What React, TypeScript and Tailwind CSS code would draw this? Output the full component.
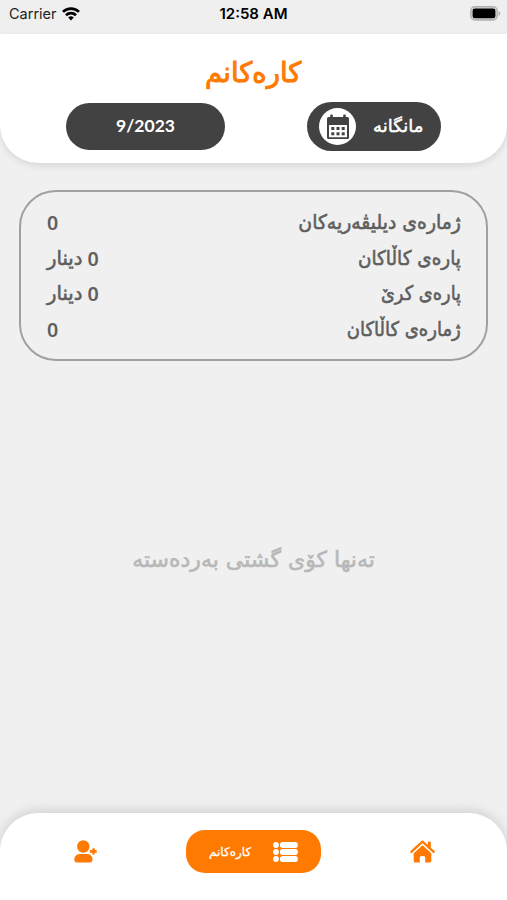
import React from 'react';

const stats = [
  { id: 1, label: 'ژمارەی دیلیڤەریەکان', value: '0', unit: '', scale: 'scale-x-[0.94]' },
  { id: 2, label: 'پارەی کاڵاکان', value: '0', unit: 'دینار', scale: 'scale-x-[0.92]' },
  { id: 3, label: 'پارەی کرێ', value: '0', unit: 'دینار', scale: 'scale-x-[0.89]' },
  { id: 4, label: 'ژمارەی کاڵاکان', value: '0', unit: '', scale: 'scale-x-[0.9]' },
];

function WifiIcon() {
  return (
    <svg width="18" height="14" viewBox="0 0 18 14" fill="none" stroke="#000" strokeWidth="2.7">
      <path d="M1 4.9a11.5 11.5 0 0 1 16 0" />
      <path d="M4 8.2a7.2 7.2 0 0 1 10 0" />
      <path d="M9 13.4 6.2 10.6a4 4 0 0 1 5.6 0z" fill="#000" stroke="none" />
    </svg>
  );
}

function BatteryIcon() {
  return (
    <svg width="31" height="15" viewBox="0 0 31 15">
      <rect x="0.8" y="0.8" width="26.4" height="13.2" rx="4" fill="#d4d4d4" stroke="#b0b0b0" strokeWidth="1.4" />
      <rect x="2.6" y="2.6" width="22.8" height="9.6" rx="2.2" fill="#000" />
      <path d="M28.7 5c2 .8 2 4 0 4.8z" fill="#aaa" />
    </svg>
  );
}

function CalendarIcon() {
  return (
    <svg width="24" height="26" viewBox="0 0 24 26" fill="#424242">
      <rect x="4.2" y="0.5" width="2.6" height="5" rx="1" />
      <rect x="17.2" y="0.5" width="2.6" height="5" rx="1" />
      <path
        fillRule="evenodd"
        d="M2.5 3h19A1.5 1.5 0 0 1 23 4.5v19a1.5 1.5 0 0 1-1.5 1.5h-19A1.5 1.5 0 0 1 1 23.5v-19A1.5 1.5 0 0 1 2.5 3zM3 11v12.3h18V11z"
      />
      {[5.3, 10.5, 15.7].map((x) => (
        <React.Fragment key={x}>
          <rect x={x} y="13" width="3" height="3" />
          <rect x={x} y="18.3" width="3" height="3" />
        </React.Fragment>
      ))}
    </svg>
  );
}

function UserIcon() {
  return (
    <svg width="23" height="23" viewBox="0 0 23 23" fill="#ff7a00">
      <circle cx="9.3" cy="6.5" r="6.2" />
      <path d="M6.5 14h6c3.5 0 6 2 6 5.5 0 1.800-1 3-2.700 3H3C1.300 22.500.3 21.300.3 19.500.3 16 3 14 6.500 14z" />
      <path d="M18.300 8.600q1.300-.8 2.600 0v1.500h1.500q.9 1.300 0 2.600h-1.500v1.500q-1.300.8-2.600 0v-1.500H16q-.7-1.300 0-2.600h2.300z" />
    </svg>
  );
}

function ListIcon() {
  return (
    <svg width="25" height="20" viewBox="0 0 25 20" fill="#fff">
      {[3, 10, 17].map((y) => (
        <React.Fragment key={y}>
          <circle cx="3" cy={y} r="2.9" />
          <rect x="7" y={y - 2.9} width="17.8" height="5.8" rx="2.5" />
        </React.Fragment>
      ))}
    </svg>
  );
}

function HomeIcon() {
  return (
    <svg width="25" height="23" viewBox="0 0 25 23" fill="#ff7a00">
      <path d="M1.3 11.8 12.5 1.7l11.2 10.1" fill="none" stroke="#ff7a00" strokeWidth="2.3" strokeLinecap="round" strokeLinejoin="round" />
      <path d="M17.8 2.5q0-1 1-1h1q1 0 1 1v5.8l-3-2.7z" />
      <path d="m12.5 5.300 8.800 7.900V21a1.500 1.500 0 0 1-1.500 1.500h-4.600v-5a1.500 1.500 0 0 0-1.500-1.500h-2.400a1.500 1.500 0 0 0-1.500 1.500v5H5.200A1.500 1.500 0 0 1 3.700 21v-7.800z" />
    </svg>
  );
}

export default function App() {
  return (
    <div className="flex h-[900px] w-[507px] flex-col overflow-hidden bg-[#f0f0f0] font-['DejaVu_Sans',sans-serif]">
      {/* Status bar */}
      <div className="grid h-[34px] shrink-0 grid-cols-3 items-start bg-[#efefef] pt-[6px] pr-[6px] pl-[9px] font-['Inter',sans-serif] text-[14.5px] leading-[16px] text-[#222]">
        <div className="flex items-center gap-[5px]">
          <span>Carrier</span>
          <WifiIcon />
        </div>
        <span className="-ml-[3px] text-center text-[15px] font-semibold whitespace-nowrap text-black">12:58 AM</span>
        <div className="flex justify-end">
          <BatteryIcon />
        </div>
      </div>

      {/* Header */}
      <header className="flex h-[129px] shrink-0 flex-col items-center rounded-b-[38px] bg-white shadow-[0_3px_7px_rgba(0,0,0,0.1)]">
        <h1 dir="rtl" className="mt-[19px] h-[40px] scale-x-[0.98] text-[28px] leading-[40px] whitespace-nowrap text-[#ff7a00] [-webkit-text-stroke:1px]">
          کارەکانم
        </h1>
        <div className="mt-[9px] flex h-[49px] w-full items-center justify-between px-[66px]">
          <button className="flex h-[47px] w-[159px] items-center justify-center rounded-full bg-[#424242] font-['Lato',sans-serif] text-[17.5px] font-bold text-white">
            9/2023
          </button>
          <button className="flex h-[49px] w-[134px] items-center rounded-full bg-[#424242] pl-[12px]">
            <span className="flex size-[37px] shrink-0 items-center justify-center rounded-full bg-white">
              <CalendarIcon />
            </span>
            <span dir="rtl" className="ml-[17px] origin-left scale-x-[1.03] text-[17.5px] whitespace-nowrap text-white [-webkit-text-stroke:0.5px]">
              مانگانە
            </span>
          </button>
        </div>
      </header>

      <main className="flex grow flex-col">
        {/* Totals */}
        <section dir="rtl" className="mx-[19px] mt-[27px] flex h-[171px] flex-col rounded-[37px] border-2 border-[#a0a0a0] px-[25px] pt-[13px] text-[20px] text-[#5f5f5f]">
          {stats.map((item) => (
            <div key={item.id} className="flex h-[35.5px] items-center justify-between leading-[35px] whitespace-nowrap">
              <span className={`origin-right [-webkit-text-stroke:0.6px] ${item.scale}`}>{item.label}</span>
              <span className="ml-px flex origin-left scale-x-[0.98] gap-[5px]">
                <span className="font-['Noto_Sans',sans-serif] text-[20px] font-semibold">{item.value}</span>
                {item.unit && <span className="[-webkit-text-stroke:0.6px]">{item.unit}</span>}
              </span>
            </div>
          ))}
        </section>

        <p dir="rtl" className="mt-[179px] text-center text-[22px] leading-[40px] whitespace-nowrap text-[#b8b8b8] [-webkit-text-stroke:0.6px]">
          تەنها کۆی گشتی بەردەستە
        </p>
      </main>

      {/* Bottom tabs */}
      <nav className="flex h-[87px] shrink-0 items-start justify-between rounded-t-[38px] bg-white pt-[17px] pr-[72px] pl-[74px] shadow-[0_-3px_12px_rgba(0,0,0,0.13)]">
        <button className="flex h-[43px] items-center">
          <UserIcon />
        </button>
        <button className="flex h-[43px] w-[135px] items-center justify-between rounded-[19px] bg-[#ff7a00] px-[23px]">
          <span dir="rtl" className="text-[12px] whitespace-nowrap text-white [-webkit-text-stroke:0.3px]">
            کارەکانم
          </span>
          <ListIcon />
        </button>
        <button className="flex h-[43px] items-center">
          <HomeIcon />
        </button>
      </nav>
    </div>
  );
}
